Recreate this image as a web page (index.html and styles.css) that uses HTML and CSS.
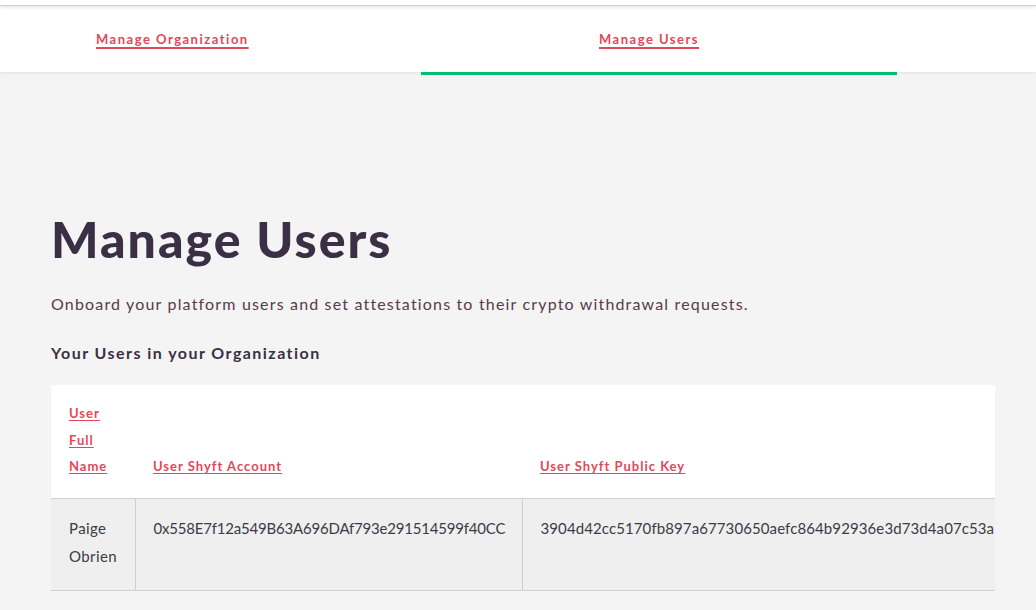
FILE: index.html
```html
<!DOCTYPE html>
<html lang="en">
<head>
<meta charset="utf-8">
<title>Manage Users</title>
<link rel="stylesheet" href="styles.css">
</head>
<body>
<div class="topstrip"></div>
<nav class="tabs">
  <div class="tab tab-org"><a href="#" class="tab-link">Manage Organization</a></div>
  <div class="tab tab-users active"><a href="#" class="tab-link">Manage Users</a></div>
</nav>
<main class="content">
  <h1 class="title">Manage Users</h1>
  <p class="lead">Onboard your platform users and set attestations to their crypto withdrawal requests.</p>
  <h2 class="subtitle">Your Users in your Organization</h2>
  <div class="table-wrap">
    <table class="users">
      <colgroup>
        <col class="c-name">
        <col class="c-account">
        <col class="c-key">
      </colgroup>
      <thead>
        <tr class="head-row">
          <th class="th-name"><a href="#">User Full Name</a></th>
          <th><a href="#">User Shyft Account</a></th>
          <th><a href="#">User Shyft Public Key</a></th>
        </tr>
      </thead>
      <tbody>
        <tr class="body-row">
          <td class="td-name">Paige Obrien</td>
          <td>0x558E7f12a549B63A696DAf793e291514599f40CC</td>
          <td class="td-key">3904d42cc5170fb897a67730650aefc864b92936e3d73d4a07c53a1b2e4f8c90d1</td>
        </tr>
      </tbody>
    </table>
  </div>
</main>
</body>
</html>
```
FILE: styles.css
```css
* { box-sizing: border-box; }
html, body { margin: 0; padding: 0; }
body {
  background: #f4f4f4;
  font-family: "Lato", "Liberation Sans", sans-serif;
  color: #3a2f45;
  width: 1036px;
  height: 610px;
  overflow: hidden;
}
.topstrip {
  height: 6px;
  background: #fff;
  border-bottom: 1px solid #cfcfcf;
  box-shadow: 0 1px 4px rgba(0,0,0,0.12);
  position: relative;
  z-index: 2;
}
.tabs {
  display: flex;
  height: 66px;
  background: #fff;
  box-shadow: 0 1px 3px rgba(0,0,0,0.08);
  position: relative;
  z-index: 1;
}
.tab {
  display: flex;
  align-items: center;
  position: relative;
  padding-bottom: 1px;
}
.tab-org { width: 421px; padding-left: 96px; }
.tab-users { width: 476px; padding-left: 178px; }
.tab.active::after {
  content: "";
  position: absolute;
  left: 0; right: 0;
  bottom: -3px;
  height: 3px;
  background: #00bf6f;
}
.tab-link {
  color: #e5475a;
  font-weight: 700;
  font-size: 13px;
  letter-spacing: 1.5px;
  text-decoration: underline;
  text-underline-offset: 3px;
  text-decoration-thickness: 1.5px;
}
.content {
  padding: 0 41px 0 51px;
}
.title {
  margin: 139px 0 0;
  font-size: 50px;
  line-height: 56px;
  font-weight: 900;
  letter-spacing: 2px;
  color: #3a2f45;
}
.lead {
  margin: 25px 0 0;
  font-size: 16px;
  line-height: 24px;
  letter-spacing: 1.17px;
  color: #5a3a48;
}
.subtitle {
  margin: 25px 0 0;
  font-size: 16px;
  line-height: 24px;
  font-weight: 700;
  letter-spacing: 1.45px;
  color: #3a2f45;
}
.table-wrap {
  margin-top: 20px;
  width: 944px;
  overflow: hidden;
}
.users {
  border-collapse: collapse;
  table-layout: fixed;
  width: 1200px;
}
.c-name { width: 84px; }
.c-account { width: 387px; }
.c-key { width: 729px; }
.head-row { background: #fff; height: 113px; }
.users th {
  text-align: left;
  vertical-align: bottom;
  padding: 14px 18px 18px;
  font-size: 13px;
  line-height: 26.5px;
  letter-spacing: 1px;
  font-weight: 700;
  border-bottom: 1px solid #cfcfcf;
}
.users th a {
  color: #e5475a;
  text-decoration: underline;
  text-underline-offset: 2px;
}
.th-name { padding-right: 12px; }
.body-row { background: #efefef; height: 92px; }
.users td {
  vertical-align: top;
  padding: 15px 18px 18px;
  font-size: 15px;
  line-height: 28px;
  letter-spacing: -0.2px;
  color: #3d3a47;
  white-space: nowrap;
  border-bottom: 1px solid #cfcfcf;
  border-left: 1px solid #cfcfcf;
}
.users .td-name { border-left: 0; white-space: normal; letter-spacing: 0.4px; }
.users .td-key { letter-spacing: 0.1px; }
```
